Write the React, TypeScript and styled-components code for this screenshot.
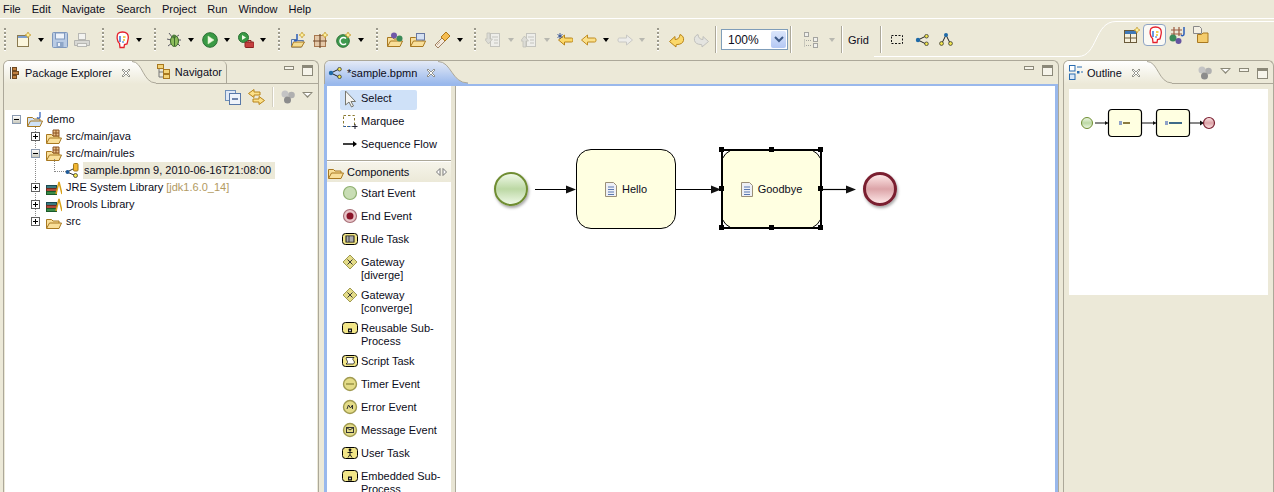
import React from 'react';
import styled, { createGlobalStyle } from 'styled-components';

/* Instruments */
const BEIGE = '#ece9d8';
const LINE = '#aca899';
const BLUE = '#99b8ec';
const FONT = '"Liberation Sans", Arial, sans-serif';

const GlobalStyle = createGlobalStyle`
  html, body { margin: 0; padding: 0; background: ${BEIGE}; }
  body { font: 11px ${FONT}; color: #0c0c20; overflow: hidden; }
  * { box-sizing: border-box; }
`;

/* Icons */
type IconProps = { children?: React.ReactNode; w?: number; h?: number };
const Ic = ({ children, w = 16, h = 16 }: IconProps) => (
    <svg width = { w } height = { h } viewBox = { `0 0 ${w} ${h}` } style = {{ display: 'block', flexShrink: 0 }}>
        {children}
    </svg>
);

const Star = ({ x = 11, y = 3 }: { x?: number; y?: number }) => (
    <path d = { `M${x} ${y - 3}l1 2 2 1-2 1-1 2-1-2-2-1 2-1z` } fill = '#fdf09a' stroke = '#c49a2c' strokeWidth = '.7' />
);

const NewIcon = () => <Ic><rect x = '1.5' y = '3.5' width = '11' height = '11' fill = '#fbf6dd' stroke = '#8a7a50' /><rect x = '2' y = '4' width = '10' height = '2' fill = '#7da0d0' /><Star x = { 12 } /></Ic>;
const SaveIcon = () => <Ic><rect x = '.5' y = '.5' width = '15' height = '15' rx = '1' fill = '#b9cbe4' stroke = '#7f98bd' /><rect x = '3.5' y = '1' width = '9' height = '6' fill = '#eef3fa' stroke = '#7f98bd' /><rect x = '4.5' y = '10' width = '7' height = '5' fill = '#8ea6c8' /><rect x = '6' y = '11' width = '2' height = '3' fill = '#eef3fa' /></Ic>;
const PrintIcon = () => <Ic><rect x = '4.5' y = '1.5' width = '7' height = '6' fill = '#f3f3f0' stroke = '#b8b8b4' /><path d = 'M.5 8.5h15v5H.5z' fill = '#d8d8d4' stroke = '#b4b4b0' /><rect x = '3.5' y = '11.5' width = '9' height = '3' fill = '#f3f3f0' stroke = '#b8b8b4' /></Ic>;
const HeadIcon = () => <Ic w = { 14 } h = { 18 }><path d = 'M3 2.5C5 .5 10 .5 12 2.5s1.2 6 .6 8l-.6 2.5-2.5.5-.5 3H5l-.5-4C2 11 1.5 5 3 2.5z' fill = '#fff' stroke = '#e5202c' strokeWidth = '1.3' /><path d = 'M5 5v6' stroke = '#2a6cd0' strokeWidth = '1.4' /><path d = 'M8 6h2.5M8 9h2' stroke = '#f0c020' strokeWidth = '1.3' /><path d = 'M8 10v2' stroke = '#2a6cd0' /></Ic>;
const BugIcon = () => <Ic><g stroke = '#334' strokeWidth = '.8'><path d = 'M3 1l3 4M13 3l-3 2M1 7l4 1M15 8l-4 0M2 14l4-3M14 14l-3-3' /></g><ellipse cx = '8.5' cy = '9' rx = '4' ry = '5.5' fill = '#8ebd5c' stroke = '#3d6a2c' /><circle cx = '8' cy = '4.5' r = '2' fill = '#4f7f3c' /><path d = 'M8.5 5v9' stroke = '#3d6a2c' /></Ic>;
const RunIcon = () => <Ic><circle cx = '8' cy = '8' r = '7.3' fill = '#3a9a45' stroke = '#2a7034' /><path d = 'M6 4l6 4-6 4z' fill = '#f4fbe8' stroke = '#d3eebb' strokeWidth = '.6' /></Ic>;
const ExtRunIcon = () => <Ic><circle cx = '5.5' cy = '5.5' r = '5' fill = '#3a9a45' stroke = '#2a7034' /><path d = 'M4 3l4 2.5-4 2.5z' fill = '#f4fbe8' /><rect x = '7' y = '10' width = '9' height = '5.5' rx = '1' fill = '#c64040' stroke = '#8a2020' /><path d = 'M10 10V8.500h3V10' stroke = '#8a2020' fill = 'none' /></Ic>;
const NewJavaIcon = () => <Ic><path d = 'M1.5 7.5h5l1 1h6l-2 6.5h-10z' fill = '#dce8f8' stroke = '#5a78a8' /><path d = 'M1.5 15l2-5h11l-3 5z' fill = '#f4dc90' stroke = '#a87820' /><path d = 'M7 2v6c0 1-2 1-3 .5' stroke = '#2a5cb8' strokeWidth = '1.5' fill = 'none' /><Star x = { 12 } /></Ic>;
const NewGridIcon = () => <Ic><rect x = '1.5' y = '3.5' width = '11' height = '11' fill = '#e4c8a8' stroke = '#a87850' /><path d = 'M7 2v14M0 9h14' stroke = '#704828' strokeWidth = '1.2' /><Star x = { 12 } /></Ic>;
const NewClassIcon = () => <Ic><circle cx = '7' cy = '9' r = '6.3' fill = '#3f9a4e' stroke = '#2a7034' /><path d = 'M10 6.5a3.5 3.500 0 100 5' stroke = '#fff' strokeWidth = '1.6' fill = 'none' /><Star x = { 12 } /></Ic>;
const Folder = ({ fill = '#f9df9a' }: { fill?: string }) => <g><path d = 'M.5 5.5h5l1.500 1.500h6v7H.5z' fill = { fill } stroke = '#a87820' /><path d = 'M.5 14.5l3-5.500h12l-2.500 5.500z' fill = { fill } stroke = '#a87820' /></g>;
const SphereFolderIcon = () => <Ic><Folder /><circle cx = '7' cy = '3.5' r = '3' fill = '#7058a8' /><circle cx = '12.5' cy = '6.5' r = '3' fill = '#3a8a58' /></Ic>;
const BoxFolderIcon = () => <Ic><Folder /><rect x = '6.5' y = '1.5' width = '8' height = '6.5' fill = '#d4e0f2' stroke = '#6878a0' /></Ic>;
const TorchIcon = () => <Ic><path d = 'M1 13l7-7 3 3-7 7z' fill = '#f3e9dc' stroke = '#a08060' /><path d = 'M7 5l5-5 4 4-5 5z' fill = '#f4bc50' stroke = '#b07818' /><path d = 'M3 13l3-3' stroke = '#c8b090' /></Ic>;
const AnnotDownIcon = () => <Ic><rect x = '5.5' y = '1.5' width = '9' height = '13' fill = '#eeeeea' stroke = '#c4c4be' /><path d = 'M7 5h6M9 8h4M9 11h4' stroke = '#c4c4be' /><path d = 'M2 1h3v6h2.500L3.500 12-.5 7H2z' fill = '#dcdcd6' stroke = '#bcbcb6' strokeWidth = '.7' /></Ic>;
const AnnotUpIcon = () => <Ic><rect x = '5.5' y = '1.5' width = '9' height = '13' fill = '#eeeeea' stroke = '#c4c4be' /><path d = 'M7 5h6M9 8h4M9 11h4' stroke = '#c4c4be' /><path d = 'M2 15h3V9h2.500L3.500 4-.5 9H2z' fill = '#dcdcd6' stroke = '#bcbcb6' strokeWidth = '.7' /></Ic>;
const ArrowLeft = ({ fill, stroke, x = 0 }: { fill: string; stroke: string; x?: number }) => <path transform = { `translate(${x} 0)` } d = 'M.5 8L6.5 3v3h7c1 0 1.500.5 1.500 2s-.5 2-1.500 2h-7v3z' fill = { fill } stroke = { stroke } />;
const LastEditIcon = () => <Ic><ArrowLeft fill = '#fbd86a' stroke = '#b88418' x = { 1 } /><path d = 'M3 1v6M.5 2.5l5 3M5.5 2.5l-5 3' stroke = '#2a4a90' strokeWidth = '.9' /></Ic>;
const BackIcon = () => <Ic><ArrowLeft fill = '#fbe08a' stroke = '#c08c20' /></Ic>;
const ForwardIcon = () => <Ic><g transform = 'translate(16 0) scale(-1 1)'><ArrowLeft fill = '#ececea' stroke = '#c8c8c4' /></g></Ic>;
const UNDO = 'M.5 9.5L6 4.500v3c3 0 4.500-1.500 5-5 3 1 4 3.500 3.500 6s-3 4-6.500 4l-1 .5V15z';
const UndoIcon = () => <Ic><path d = { UNDO } fill = '#fbd86a' stroke = '#b88418' /></Ic>;
const RedoIcon = () => <Ic><g transform = 'translate(16 0) scale(-1 1)'><path d = { UNDO } fill = '#e4e4e0' stroke = '#c0c0bc' /></g></Ic>;
const LayoutIcon = () => <Ic><g fill = '#f0f0ec' stroke = '#a4a4a0'><rect x = '1.5' y = '.5' width = '4' height = '4' /><rect x = '10.5' y = '5.5' width = '4' height = '4' /><rect x = '10.5' y = '11.5' width = '4' height = '4' /></g><path d = 'M1.5 7.5v7M3 8.500h6M3 13.500h6' stroke = '#a4a4a0' strokeDasharray = '1 1' /></Ic>;
const DashedBoxIcon = () => <Ic w = { 14 }><rect x = '1.5' y = '3.5' width = '11' height = '8' fill = 'none' stroke = '#111' strokeDasharray = '2 1.5' /></Ic>;
const ShareIcon = ({ h = 12 }: { h?: number }) => <Ic w = { 14 } h = { h }><path d = 'M3 6l8-4M3 6l8 4' stroke = '#222' /><circle cx = '3' cy = '6' r = '2.2' fill = '#1e6aa8' /><circle cx = '11.5' cy = '2.2' r = '1.8' fill = '#f4e850' stroke = '#222' strokeWidth = '.7' /><circle cx = '11.5' cy = '9.8' r = '1.8' fill = '#f4e850' stroke = '#222' strokeWidth = '.7' /></Ic>;
const TreeIcon = () => <Ic w = { 14 }><path d = 'M7 3l-4 8M7 3l4 8' stroke = '#222' /><circle cx = '7' cy = '3' r = '2' fill = '#1e6aa8' /><circle cx = '2.5' cy = '11.5' r = '1.9' fill = '#f4e850' stroke = '#222' strokeWidth = '.7' /><circle cx = '11.5' cy = '11.5' r = '1.9' fill = '#f4e850' stroke = '#222' strokeWidth = '.7' /></Ic>;
const TableIcon = () => <Ic><rect x = '.5' y = '3.5' width = '12' height = '12' fill = '#f6f0dc' stroke = '#6a5a3a' /><rect x = '1' y = '4' width = '11' height = '3' fill = '#3f78b8' /><path d = 'M.5 11h12M6.500 7v8' stroke = '#6a5a3a' /><Star x = { 13 } /></Ic>;
const DebugPerspIcon = () => <Ic w = { 18 } h = { 18 }><path d = 'M5 1v9M10 1v9M2 4h11M2 8h11' stroke = '#9a5a40' strokeWidth = '1.2' /><path d = 'M15 1v7c0 2-2 2-3 1' stroke = '#2a5cb8' strokeWidth = '1.5' fill = 'none' /><circle cx = '4' cy = '12' r = '3.5' fill = '#3a8a58' /><circle cx = '9.5' cy = '15' r = '3' fill = '#6454a0' /></Ic>;
const ResourceIcon = () => <Ic w = { 16 } h = { 18 }><path d = 'M.5.5h6l2 2v5h-8z' fill = '#f4f0e4' stroke = '#888' /><path d = 'M4.5 8.5h4l1.500-1.500h5v9.500H4.500z' fill = '#f4cc6c' stroke = '#a87820' /></Ic>;
const CollapseIcon = () => <Ic><rect x = '.5' y = '1.5' width = '10' height = '10' fill = '#dfe8f5' stroke = '#6f8fb8' /><rect x = '4.5' y = '4.5' width = '11' height = '11' fill = '#eef3fa' stroke = '#5878a8' /><path d = 'M7 10h6' stroke = '#2a4a80' strokeWidth = '1.3' /></Ic>;
const LinkIcon = () => <Ic w = { 17 }><path d = 'M6 .5L.5 4.500 6 8.500V6h6V3H6z' fill = '#fbe08a' stroke = '#b88418' /><path d = 'M11 7.5l5.500 4-5.500 4V13H5v-3h6z' fill = '#fbe08a' stroke = '#b88418' /></Ic>;
const SpheresIcon = () => <Ic w = { 14 }><circle cx = '4' cy = '5' r = '3.5' fill = '#c4c4c4' /><circle cx = '10.5' cy = '6' r = '3.3' fill = '#b0b0b0' /><circle cx = '6.5' cy = '11' r = '3.5' fill = '#8c8c8c' /></Ic>;
const CloseIcon = () => <Ic w = { 10 } h = { 10 }><path d = 'M2 1l3 3 3-3 1 1-3 3 3 3-1 1-3-3-3 3-1-1 3-3-3-3z' fill = '#fff' stroke = '#7c7c74' strokeWidth = '.8' /></Ic>;
const PackageViewIcon = () => <Ic><path d = 'M2.5 2v12' stroke = '#555' /><rect x = '4.5' y = '2.5' width = '4' height = '3' fill = '#c08040' stroke = '#704820' /><rect x = '4.5' y = '6.5' width = '6' height = '3' fill = '#c08040' stroke = '#704820' /><rect x = '4.5' y = '10.5' width = '4' height = '3' fill = '#c08040' stroke = '#704820' /></Ic>;
const NavigatorIcon = () => <Ic><path d = 'M2 3v10h4M2 8h4' stroke = '#777' fill = 'none' /><rect x = '.5' y = '.5' width = '6' height = '4' fill = '#f4d478' stroke = '#a87820' /><rect x = '6.5' y = '5.5' width = '6' height = '4' fill = '#f4d478' stroke = '#a87820' /><rect x = '6.5' y = '10.5' width = '6' height = '4' fill = '#f4d478' stroke = '#a87820' /></Ic>;
const OutlineIcon = () => <Ic w = { 14 }><rect x = '.5' y = '.5' width = '5.5' height = '5.5' fill = '#fff' stroke = '#2a6cb0' /><rect x = '.5' y = '9' width = '5.5' height = '5.5' fill = '#d8e8f8' stroke = '#2a6cb0' /><rect x = '8' y = '6' width = '2.5' height = '2.5' fill = '#2a6cb0' /><path d = 'M8 2h5M12 7h2' stroke = '#2a6cb0' /></Ic>;
const OpenFolderIcon = () => <Ic><Folder /></Ic>;
const ProjectIcon = () => <Ic><Folder fill = '#cfe2f8' /><path d = 'M13 0v5c0 1.500-2 1.500-3 .5' stroke = '#2a5cb8' strokeWidth = '1.2' fill = 'none' /></Ic>;
const PackageFolderIcon = () => <Ic><Folder /><path d = 'M7 1h6v6H7zM10 1v6M7 4h6' stroke = '#8a5020' fill = '#e8c088' /></Ic>;
const BpmnFileIcon = () => <Ic w = { 15 }><path d = 'M2 9l7-3.500M2 9l7 3' stroke = '#333' /><circle cx = '2.5' cy = '9' r = '2' fill = '#1e5a98' /><rect x = '8.5' y = '.5' width = '4.5' height = '7.5' rx = '1' fill = '#f2b632' stroke = '#a07818' /><circle cx = '10.5' cy = '12.5' r = '2' fill = '#f4e850' stroke = '#222' strokeWidth = '.7' /></Ic>;
const LibraryIcon = () => <Ic><rect x = '.5' y = '5.5' width = '10' height = '3' fill = '#3a7a80' stroke = '#1a4a50' /><rect x = '.5' y = '8.5' width = '10' height = '3' fill = '#b04a38' stroke = '#702a20' /><rect x = '.5' y = '11.5' width = '10' height = '3' fill = '#3a8a48' stroke = '#1a5a28' /><path d = 'M10 14l3-12 3 12' stroke = '#d8a018' strokeWidth = '1.5' fill = 'none' /></Ic>;
const CursorIcon = () => <Ic h = { 18 }><path d = 'M3.5 1v14l3.500-3 2.500 5 2-1-2.500-4.500h4.500z' fill = '#f4f4f2' stroke = '#77776f' /></Ic>;
const MarqueeIcon = () => <Ic><rect x = '1.5' y = '2.5' width = '11' height = '11' fill = 'none' stroke = '#8a7a30' strokeDasharray = '2.5 2' /><path d = 'M1.5 13.500h11' stroke = '#2a5ca8' strokeDasharray = '2.5 2' /><path d = 'M13 11v5M10.500 13.500h5' stroke = '#223' /></Ic>;
const FlowIcon = () => <Ic><path d = 'M1 8h11' stroke = '#000' strokeWidth = '1.5' /><path d = 'M11 5l4 3-4 3z' fill = '#000' /></Ic>;
const RoundEvent = ({ fill, stroke, dot }: { fill: string; stroke: string; dot?: string }) => <Ic><circle cx = '8' cy = '8' r = '6.5' fill = { fill } stroke = { stroke } strokeWidth = '1.2' />{dot ? <circle cx = '8' cy = '8' r = '3.5' fill = { dot } /> : null}</Ic>;
const StartIcon = () => <RoundEvent fill = '#c8ddb4' stroke = '#8fb070' />;
const EndIcon = () => <RoundEvent fill = '#e8c4c8' stroke = '#a87078' dot = '#8a1428' />;
const YellowBox = ({ children }: { children?: React.ReactNode }) => <Ic><rect x = '.5' y = '2.5' width = '15' height = '11' rx = '3' fill = '#f2e688' stroke = '#000' />{children}</Ic>;
const RuleIcon = () => <YellowBox><rect x = '4' y = '5' width = '8' height = '6' fill = '#fff' stroke = '#111' /><path d = 'M4 7h8M4 9h8M7 5v6' stroke = '#111' strokeWidth = '.7' /></YellowBox>;
const SubIcon = () => <YellowBox><rect x = '6' y = '8.5' width = '4' height = '4' fill = '#111' /><path d = 'M7 10.500h2M8 9.500v2' stroke = '#fff' strokeWidth = '.7' /></YellowBox>;
const ScriptIcon = () => <YellowBox><path d = 'M5 4.500h7c-2 2-1 2 0 3.500s0 3-1 3H4c1.500-1 2-2 1-3.500s-1-3 0-3.500z' fill = '#fff' stroke = '#111' strokeWidth = '.8' /></YellowBox>;
const UserIcon = () => <YellowBox><circle cx = '8' cy = '4.8' r = '1.4' fill = '#111' /><path d = 'M8 6v3.500l-2 3M8 9.500l2 3M5.500 7.500h5' stroke = '#111' strokeWidth = '.9' fill = 'none' /></YellowBox>;
const GatewayIcon = () => <Ic><path d = 'M8 1l7 7-7 7-7-7z' fill = '#e4dc88' stroke = '#a09a50' /><path d = 'M5.500 5.500l5 5M10.500 5.500l-5 5' stroke = '#333' fill = 'none' /></Ic>;
const OliveEvent = ({ children }: { children?: React.ReactNode }) => <Ic><circle cx = '8' cy = '8' r = '6.5' fill = '#e4dc88' stroke = '#a09a50' strokeWidth = '1.4' />{children}</Ic>;
const TimerIcon = () => <OliveEvent><path d = 'M4 8h8' stroke = '#9a9448' strokeWidth = '1.5' /></OliveEvent>;
const ErrorIcon = () => <OliveEvent><path d = 'M5 10l1.500-4 2 3 2-3v4' stroke = '#333' fill = 'none' /></OliveEvent>;
const MessageIcon = () => <OliveEvent><rect x = '4.5' y = '5.5' width = '7' height = '5' fill = 'none' stroke = '#333' /><path d = 'M4.500 5.500l3.500 2.500 3.500-2.500' stroke = '#333' fill = 'none' /></OliveEvent>;
const DocIcon = () => <Ic w = { 12 } h = { 15 }><path d = 'M.5.5h8l3 3v11H.5z' fill = '#eef0f6' stroke = '#9a8f78' /><path d = 'M3 5h6M3 7.500h6M3 10h6M3 12.500h6' stroke = '#5a78b0' /></Ic>;

/* Components */
const Tree = () => (
    <TreeBox>
        <TreeRow $level = { 0 }><Expander $open $soft /><ProjectIcon /><TreeText>demo</TreeText></TreeRow>
        <TreeRow $level = { 1 }><Expander /><PackageFolderIcon /><TreeText>src/main/java</TreeText></TreeRow>
        <TreeRow $level = { 1 }><Expander $open $soft /><PackageFolderIcon /><TreeText>src/main/rules</TreeText></TreeRow>
        <TreeRow $level = { 2 }>
            <LeafGuide /><BpmnFileIcon />
            <TreeText $selected>sample.bpmn 9, 2010-06-16T21:08:00</TreeText>
        </TreeRow>
        <TreeRow $level = { 1 }><Expander /><LibraryIcon /><TreeText>JRE System Library <Muted>[jdk1.6.0_14]</Muted></TreeText></TreeRow>
        <TreeRow $level = { 1 }><Expander /><LibraryIcon /><TreeText>Drools Library</TreeText></TreeRow>
        <TreeRow $level = { 1 }><Expander /><OpenFolderIcon /><TreeText>src</TreeText></TreeRow>
    </TreeBox>
);

const paletteTop = [
    { label: 'Select', icon: <CursorIcon />, active: true },
    { label: 'Marquee', icon: <MarqueeIcon /> },
    { label: 'Sequence Flow', icon: <FlowIcon /> },
];

const paletteItems = [
    { label: 'Start Event', icon: <StartIcon /> },
    { label: 'End Event', icon: <EndIcon /> },
    { label: 'Rule Task', icon: <RuleIcon /> },
    { label: 'Gateway\n[diverge]', icon: <GatewayIcon /> },
    { label: 'Gateway\n[converge]', icon: <GatewayIcon /> },
    { label: 'Reusable Sub-\nProcess', icon: <SubIcon /> },
    { label: 'Script Task', icon: <ScriptIcon /> },
    { label: 'Timer Event', icon: <TimerIcon /> },
    { label: 'Error Event', icon: <ErrorIcon /> },
    { label: 'Message Event', icon: <MessageIcon /> },
    { label: 'User Task', icon: <UserIcon /> },
    { label: 'Embedded Sub-\nProcess', icon: <SubIcon /> },
];

const handleSpots = [['0', '0'], ['50%', '0'], ['100%', '0'], ['0', '50%'], ['100%', '50%'], ['0', '100%'], ['50%', '100%'], ['100%', '100%']];

const Edge = ({ x, w }: { x: number; w: number }) => (
    <EdgeSvg $x = { x } width = { w } height = '11' viewBox = { `0 0 ${w} 11` }>
        <path d = { `M0 5.5H${w - 8}` } stroke = '#000' strokeWidth = '1.2' />
        <path d = { `M${w - 10} 1.5L${w} 5.5L${w - 10} 9.5z` } fill = '#111' />
    </EdgeSvg>
);

const MiniDiagram = () => (
    <svg width = '199' height = '70' viewBox = '0 0 199 70' style = {{ display: 'block' }}>
        <defs>
            <linearGradient id = 'miniGreen' x1 = '0' y1 = '0' x2 = '0' y2 = '1'><stop offset = '0' stopColor = '#eef8e6' /><stop offset = '.5' stopColor = '#bcd8a4' /><stop offset = '1' stopColor = '#eef8e6' /></linearGradient>
            <linearGradient id = 'miniRed' x1 = '0' y1 = '0' x2 = '0' y2 = '1'><stop offset = '0' stopColor = '#fde6e6' /><stop offset = '.5' stopColor = '#dca4a8' /><stop offset = '1' stopColor = '#fde6e6' /></linearGradient>
        </defs>
        <circle cx = '18' cy = '34' r = '5.5' fill = 'url(#miniGreen)' stroke = '#6f8d32' />
        <path d = 'M26 34h13M73 34h14M121 34h12' stroke = '#111' />
        <path d = 'M36 32l3 2-3 2zM84 32l3 2-3 2zM131 31.5l4 2.500-4 2.500z' fill = '#111' />
        <rect x = '39.5' y = '20.5' width = '33' height = '27' rx = '3.5' fill = '#ffffe1' stroke = '#000' strokeWidth = '1.2' />
        <rect x = '87.5' y = '20.5' width = '33' height = '27' rx = '3.5' fill = '#ffffe1' stroke = '#000' strokeWidth = '1.2' />
        <rect x = '50' y = '32' width = '3' height = '4' fill = '#8fa2c8' />
        <rect x = '54' y = '33' width = '7' height = '2' fill = '#8a7a40' />
        <rect x = '96' y = '32' width = '3' height = '4' fill = '#8fa2c8' />
        <rect x = '100' y = '33' width = '13' height = '2' fill = '#3f6a88' />
        <circle cx = '140' cy = '34' r = '5.5' fill = 'url(#miniRed)' stroke = '#7a1f30' strokeWidth = '1.2' />
    </svg>
);

/* Tab curve, shared by the three view stacks */
const TabCurve = ({ editor, w = 24 }: { editor?: boolean; w?: number }) => {
    const id = editor ? 'curveEditor' : 'curvePlain';
    const top = `M0 .5C${w * 0.45} .5 ${w * 0.45} 22 ${w} 22`;

    return (
        <CurveSvg width = { w } height = '23' viewBox = { `0 0 ${w} 23` }>
            <defs>
                <linearGradient id = { id } x1 = '0' y1 = '0' x2 = '0' y2 = '1'>
                    <stop offset = '0' stopColor = { editor ? '#e4eaf6' : '#fff' } />
                    <stop offset = '1' stopColor = { editor ? BLUE : BEIGE } />
                </linearGradient>
            </defs>
            <path d = { `${top}V23H0z` } fill = { `url(#${id})` } />
            <path d = { top } fill = 'none' stroke = { LINE } />
        </CurveSvg>
    );
};

const App = () => (
    <Page>
        <GlobalStyle />
        <MenuBar>
            {['File', 'Edit', 'Navigate', 'Search', 'Project', 'Run', 'Window', 'Help'].map((item) => <span key = { item }>{item}</span>)}
        </MenuBar>

        <Toolbar>
            <Grip $ml = { 3 } />
            <Tool $ml = { 9 }><NewIcon /></Tool><Drop $ml = { 4 } />
            <Tool $ml = { 7 }><SaveIcon /></Tool>
            <Tool $ml = { 6 }><PrintIcon /></Tool>
            <Grip $ml = { 11 } />
            <Tool $ml = { 9 }><HeadIcon /></Tool><Drop $ml = { 4 } />
            <Grip $ml = { 10 } />
            <Tool $ml = { 9 }><BugIcon /></Tool><Drop $ml = { 4 } />
            <Tool $ml = { 7 }><RunIcon /></Tool><Drop $ml = { 4 } />
            <Tool $ml = { 7 }><ExtRunIcon /></Tool><Drop $ml = { 4 } />
            <Grip $ml = { 10 } />
            <Tool $ml = { 9 }><NewJavaIcon /></Tool>
            <Tool $ml = { 7 }><NewGridIcon /></Tool>
            <Tool $ml = { 7 }><NewClassIcon /></Tool><Drop $ml = { 4 } />
            <Grip $ml = { 10 } />
            <Tool $ml = { 8 }><SphereFolderIcon /></Tool>
            <Tool $ml = { 7 }><BoxFolderIcon /></Tool>
            <Tool $ml = { 8 }><TorchIcon /></Tool><Drop $ml = { 5 } />
            <Grip $ml = { 9 } />
            <Tool $ml = { 8 }><AnnotDownIcon /></Tool><Drop $ml = { 5 } $off />
            <Tool $ml = { 6 }><AnnotUpIcon /></Tool><Drop $ml = { 5 } $off />
            <Tool $ml = { 6 }><LastEditIcon /></Tool>
            <Tool $ml = { 8 }><BackIcon /></Tool><Drop $ml = { 4 } />
            <Tool $ml = { 7 }><ForwardIcon /></Tool><Drop $ml = { 4 } $off />
            <Grip $ml = { 10 } />
            <Tool $ml = { 9 }><UndoIcon /></Tool>
            <Tool $ml = { 8 }><RedoIcon /></Tool>
            <ToolSep $ml = { 6 } />
            <ZoomCombo>
                <ZoomValue>100%</ZoomValue>
                <ZoomButton>
                    <svg width = '10' height = '7' viewBox = '0 0 10 7'><path d = 'M1 1l4 4 4-4' stroke = '#3d5a88' strokeWidth = '2' fill = 'none' /></svg>
                </ZoomButton>
            </ZoomCombo>
            <ToolSep $ml = { 2 } />
            <Tool $ml = { 11 }><LayoutIcon /></Tool><Drop $ml = { 8 } $off />
            <ToolSep $ml = { 5 } />
            <GridLabel>Grid</GridLabel>
            <ToolSep $ml = { 12 } />
            <Tool $ml = { 7 }><DashedBoxIcon /></Tool>
            <Tool $ml = { 9 }><ShareIcon /></Tool>
            <Tool $ml = { 8 }><TreeIcon /></Tool>

            <PerspectiveCurve width = '400' height = '40' viewBox = '0 0 400 40'>
                <path d = 'M0 38.5H204C224 38.5 220 3.5 242 3.5H400' fill = 'none' stroke = '#fff' />
            </PerspectiveCurve>
            <Perspectives>
                <PerspectiveSlot><TableIcon /></PerspectiveSlot>
                <PerspectiveSlot $active><HeadIcon /></PerspectiveSlot>
                <PerspectiveSlot><DebugPerspIcon /></PerspectiveSlot>
                <PerspectiveSlot><ResourceIcon /></PerspectiveSlot>
            </Perspectives>
        </Toolbar>

        <Workbench>
            <ExplorerPanel>
                <TabRow>
                    <ActiveTab $pad = { 4 } $end = { 1 }>
                        <PackageViewIcon />
                        <TabTitle $ml = { 1 }>Package Explorer</TabTitle>
                        <CloseIcon />
                    </ActiveTab>
                    <TabCurve />
                    <PlainTab><NavigatorIcon /><span>Navigator</span></PlainTab>
                    <ViewControls>
                        <MinButton /><MaxButton />
                    </ViewControls>
                </TabRow>
                <ViewToolbar>
                    <CollapseIcon />
                    <LinkIcon />
                    <ViewSep />
                    <SpheresIcon />
                    <MenuTriangle />
                </ViewToolbar>
                <Tree />
            </ExplorerPanel>

            <EditorPanel>
                <TabRow $editor>
                    <ActiveTab $editor $pad = { 3 } $end = { 2 }>
                        <ShareIcon />
                        <TabTitle $ml = { 5 }>*sample.bpmn</TabTitle>
                        <CloseIcon />
                    </ActiveTab>
                    <TabCurve editor w = { 30 } />
                    <ViewControls>
                        <MinButton /><MaxButton />
                    </ViewControls>
                </TabRow>
                <EditorFrame>
                    <Palette>
                        <PaletteList>
                            {paletteTop.map((item) => (
                                <PaletteRow key = { item.label } $active = { item.active }>
                                    <PaletteIcon>{item.icon}</PaletteIcon>{item.label}
                                </PaletteRow>
                            ))}
                            <PaletteDivider />
                            <Drawer>
                                <OpenFolderIcon />
                                <DrawerTitle>Components</DrawerTitle>
                                <svg width = '11' height = '8' viewBox = '0 0 11 8'><path d = 'M4 .5L.5 4 4 7.5zM7 .5L10.5 4 7 7.5z' fill = '#fff' stroke = '#777' /></svg>
                            </Drawer>
                            {paletteItems.map((item) => (
                                <PaletteRow key = { item.label }>
                                    <PaletteIcon>{item.icon}</PaletteIcon>{item.label}
                                </PaletteRow>
                            ))}
                        </PaletteList>
                        <PaletteSash />
                    </Palette>
                    <Canvas>
                        <StartNode />
                        <Edge x = { 79 } w = { 41 } />
                        <TaskNode $x = { 120 }><DocIcon />Hello</TaskNode>
                        <Edge x = { 220 } w = { 45 } />
                        <TaskNode $x = { 265 } $selected>
                            <DocIcon />Goodbye
                            {handleSpots.map(([left, top]) => <Handle key = { left + top } style = {{ left, top }} />)}
                        </TaskNode>
                        <Edge x = { 367 } w = { 33 } />
                        <EndNode />
                    </Canvas>
                </EditorFrame>
            </EditorPanel>

            <OutlinePanel>
                <TabRow>
                    <ActiveTab $pad = { 5 } $end = { 6 }>
                        <OutlineIcon />
                        <TabTitle $ml = { 4 }>Outline</TabTitle>
                        <CloseIcon />
                    </ActiveTab>
                    <TabCurve w = { 25 } />
                    <ViewControls>
                        <SpheresIcon /><MenuTriangle /><MinButton /><MaxButton />
                    </ViewControls>
                </TabRow>
                <OutlineView><MiniDiagram /></OutlineView>
            </OutlinePanel>
        </Workbench>
    </Page>
);

export default App;

/* Styles */
const Page = styled.div`
  width: 1274px;
  height: 492px;
  display: flex;
  flex-direction: column;
  overflow: hidden;
  background: ${BEIGE};
`;

const MenuBar = styled.div`
  height: 19px;
  flex-shrink: 0;
  display: flex;
  align-items: center;
  padding: 0 0 1px 3px;
  gap: 11px;
  border-bottom: 1px solid #fff;
`;

const Toolbar = styled.div`
  height: 41px;
  flex-shrink: 0;
  display: flex;
  align-items: center;
  position: relative;
`;

const Tool = styled.div<{ $ml: number }>`
  width: 16px;
  height: 18px;
  margin-left: ${(p) => p.$ml}px;
  display: flex;
  align-items: center;
  justify-content: center;
  flex-shrink: 0;
`;

const Drop = styled.div<{ $ml: number; $off?: boolean }>`
  width: 9px;
  margin-left: ${(p) => p.$ml}px;
  flex-shrink: 0;
  display: flex;
  justify-content: center;
  &::before {
    content: '';
    border-style: solid;
    border-width: 4px 3.5px 0;
    border-color: ${(p) => (p.$off ? '#b8b8b0' : '#000')} transparent transparent;
  }
`;

const Grip = styled.div<{ $ml: number }>`
  width: 4px;
  height: 23px;
  margin-left: ${(p) => p.$ml}px;
  flex-shrink: 0;
  background: repeating-linear-gradient(to bottom, #9c9a8c 0 2px, #fff 2px 3px, transparent 3px 4px) center / 2px 100% no-repeat;
`;

const ToolSep = styled.div<{ $ml: number }>`
  width: 2px;
  height: 27px;
  margin-left: ${(p) => p.$ml}px;
  flex-shrink: 0;
  background: linear-gradient(to right, ${LINE} 50%, #fff 50%);
`;

const ZoomCombo = styled.div`
  width: 67px;
  height: 21px;
  margin-left: 4px;
  flex-shrink: 0;
  display: flex;
  align-items: center;
  justify-content: space-between;
  background: #fff;
  border: 1px solid #7f9db9;
  padding: 1px;
`;

const ZoomValue = styled.span`
  padding-left: 5px;
  font-size: 12px;
`;

const ZoomButton = styled.div`
  width: 15px;
  height: 17px;
  display: flex;
  align-items: center;
  justify-content: center;
  border-radius: 2px;
  background: linear-gradient(#dbe6fb, #b4c8f4);
`;

const GridLabel = styled.span`
  margin-left: 5px;
  width: 20px;
  flex-shrink: 0;
`;

const PerspectiveCurve = styled.svg`
  position: absolute;
  right: 0;
  top: -1px;
`;

const Perspectives = styled.div`
  margin-left: auto;
  height: 100%;
  position: relative;
  display: flex;
  align-items: flex-start;
  padding: 5px 62px 0 0;
`;

const PerspectiveSlot = styled.div<{ $active?: boolean }>`
  width: 23px;
  height: 22px;
  display: flex;
  align-items: center;
  justify-content: center;
  border-radius: 4px;
  ${(p) => (p.$active ? 'background: #fbfaf5; border: 1px solid #8ea4c4;' : '')}
`;

const Workbench = styled.div`
  flex: 1;
  display: flex;
  padding-left: 3px;
  min-height: 0;
`;

const PanelBase = styled.div`
  display: flex;
  flex-direction: column;
  flex-shrink: 0;
  border: 1px solid ${LINE};
  border-bottom: 0;
  border-radius: 6px 6px 0 0;
  background: ${BEIGE};
`;

const ExplorerPanel = styled(PanelBase)`
  width: 316px;
`;

const EditorPanel = styled(PanelBase)`
  width: 735px;
  margin-left: 5px;
`;

const OutlinePanel = styled(PanelBase)`
  width: 211px;
  margin-left: 4px;
`;

const TabRow = styled.div<{ $editor?: boolean }>`
  height: 23px;
  flex-shrink: 0;
  display: flex;
  align-items: flex-start;
  position: relative;
  border-bottom: ${(p) => (p.$editor ? '0' : `1px solid ${LINE}`)};
`;

const ActiveTab = styled.div<{ $editor?: boolean; $pad: number; $end: number }>`
  height: 23px;
  flex-shrink: 0;
  display: flex;
  align-items: center;
  padding: 0 ${(p) => p.$end}px 0 ${(p) => p.$pad}px;
  border-radius: 5px 0 0 0;
  position: relative;
  z-index: 1;
  background: linear-gradient(${(p) => (p.$editor ? `#e4eaf6, ${BLUE}` : `#fff, ${BEIGE}`)});
`;

const CurveSvg = styled.svg`
  display: block;
  flex-shrink: 0;
  position: relative;
  z-index: 1;
`;

const TabTitle = styled.span<{ $ml: number }>`
  margin: 0 9px 0 ${(p) => p.$ml}px;
  white-space: nowrap;
`;

const PlainTab = styled.div`
  height: 22px;
  padding: 0 4px 0 1px;
  display: flex;
  align-items: center;
  gap: 2px;
  flex-shrink: 0;
  white-space: nowrap;
  border-right: 1px solid ${LINE};
  border-top-right-radius: 5px;
`;

const ViewControls = styled.div`
  margin-left: auto;
  display: flex;
  align-items: center;
  gap: 8px;
  padding: 4px 5px 0 0;
`;

const MinButton = styled.div`
  width: 10px;
  height: 4px;
  background: #f6f4ea;
  border: 1px solid #8b8878;
  margin-bottom: 6px;
`;

const MaxButton = styled.div`
  width: 11px;
  height: 11px;
  background: linear-gradient(#8b8878 2px, #f6f4ea 2px);
  border: 1px solid #8b8878;
`;

const MenuTriangle = styled.div`
  width: 11px;
  height: 6px;
  clip-path: polygon(0 0, 100% 0, 50% 100%);
  background: #8b8878;
  position: relative;
  margin-bottom: 4px;
  &::after {
    content: '';
    position: absolute;
    inset: 1px 2px 2px;
    clip-path: polygon(0 0, 100% 0, 50% 100%);
    background: #fff;
  }
`;

const ViewToolbar = styled.div`
  height: 26px;
  flex-shrink: 0;
  display: flex;
  align-items: center;
  justify-content: flex-end;
  gap: 7px;
  padding-right: 5px;
`;

const ViewSep = styled.div`
  width: 2px;
  height: 20px;
  background: linear-gradient(to right, #d4d0c0 50%, #fff 50%);
`;

const TreeBox = styled.div`
  flex: 1;
  margin: 0 1px;
  padding-top: 1px;
  background: #fff;
  position: relative;
  &::before {
    content: '';
    position: absolute;
    left: 30px;
    top: 16px;
    height: 96px;
    border-left: 1px dotted #888;
  }
`;

const TreeRow = styled.div<{ $level: number }>`
  height: 17px;
  display: flex;
  align-items: center;
  gap: 6px;
  padding-left: ${(p) => 7 + p.$level * 19}px;
  position: relative;
`;

const TreeText = styled.span<{ $selected?: boolean }>`
  margin-left: -3px;
  padding: 2px 4px 2px 1px;
  line-height: 13px;
  white-space: nowrap;
  background: ${(p) => (p.$selected ? BEIGE : 'transparent')};
`;

const Muted = styled.span`
  color: #b29a62;
`;

const Expander = styled.div<{ $open?: boolean; $soft?: boolean }>`
  width: 9px;
  height: 9px;
  flex-shrink: 0;
  position: relative;
  background: ${(p) => (p.$soft ? 'linear-gradient(#fff, #c8c8bc)' : '#fff')};
  border: 1px solid ${(p) => (p.$soft ? '#8a9ab0' : '#606060')};
  z-index: 1;
  &::before {
    content: '';
    position: absolute;
    left: 1px;
    right: 1px;
    top: 3px;
    height: 1px;
    background: #000;
  }
  &::after {
    content: '';
    display: ${(p) => (p.$open ? 'none' : 'block')};
    position: absolute;
    left: 3px;
    top: 1px;
    bottom: 1px;
    width: 1px;
    background: #000;
  }
`;

const LeafGuide = styled.div`
  width: 9px;
  height: 17px;
  flex-shrink: 0;
  position: relative;
  &::before {
    content: '';
    position: absolute;
    left: 4px;
    top: -3px;
    height: 12px;
    width: 11px;
    border-left: 1px dotted #888;
    border-bottom: 1px dotted #888;
  }
`;

const EditorFrame = styled.div`
  flex: 1;
  min-height: 0;
  display: flex;
  border: solid ${BLUE};
  border-width: 2px 3px 0 3px;
  margin-left: -1px;
  background: #fff;
`;

const Palette = styled.div`
  width: 129px;
  flex-shrink: 0;
  display: flex;
  background: #fff;
`;

const PaletteList = styled.div`
  flex: 1;
  min-width: 0;
  padding-top: 1px;
`;

const PaletteSash = styled.div`
  width: 5px;
  flex-shrink: 0;
  background: #e8e5d4;
  border-right: 1px solid ${LINE};
`;

const PaletteRow = styled.div<{ $active?: boolean }>`
  margin: 3px 0 0 13px;
  padding: 2px;
  min-height: 20px;
  display: flex;
  align-items: flex-start;
  line-height: 13px;
  gap: 3px;
  white-space: pre-line;
  width: ${(p) => (p.$active ? '77px' : 'auto')};
  background: ${(p) => (p.$active ? '#cfe1f8' : 'transparent')};
  border-radius: 2px;
`;

const PaletteIcon = styled.span`
  width: 16px;
  margin-top: -2px;
  flex-shrink: 0;
`;

const PaletteDivider = styled.div`
  height: 2px;
  margin: 4px 0 0;
  background: linear-gradient(${LINE} 50%, #fff 50%);
`;

const Drawer = styled.div`
  height: 20px;
  display: flex;
  align-items: center;
  gap: 3px;
  padding: 0 4px 1px 1px;
  background: linear-gradient(#f6f4ea, ${BEIGE});
`;

const DrawerTitle = styled.span`
  flex: 1;
`;

const Canvas = styled.div`
  flex: 1;
  position: relative;
  background: #fff;
`;

const EventNode = styled.div`
  position: absolute;
  top: 86px;
  width: 34px;
  height: 34px;
  border-radius: 50%;
`;

const StartNode = styled(EventNode)`
  left: 38px;
  border: 2px solid #6f8d32;
  background: linear-gradient(#eef8e6, #bcd8a4 50%, #eef8e6);
  box-shadow: 1px 2px 3px rgba(0, 0, 0, .35);
`;

const EndNode = styled(EventNode)`
  left: 407px;
  border: 3px solid #7a1f30;
  background: linear-gradient(#fde6e6, #dca4a8 50%, #fde6e6);
  box-shadow: 1px 2px 3px rgba(0, 0, 0, .35);
`;

const EdgeSvg = styled.svg<{ $x: number }>`
  position: absolute;
  left: ${(p) => p.$x}px;
  top: 97.5px;
`;

const TaskNode = styled.div<{ $x: number; $selected?: boolean }>`
  position: absolute;
  left: ${(p) => p.$x}px;
  top: 63px;
  width: ${(p) => (p.$selected ? 101 : 100)}px;
  height: 80px;
  display: flex;
  align-items: center;
  justify-content: center;
  gap: 5px;
  border: 1px solid #000;
  border-radius: 15px;
  background: #ffffe1;
  ${(p) => (p.$selected ? `
    &::before {
      content: '';
      position: absolute;
      inset: -1px;
      border: 2px solid #000;
    }
  ` : '')}
`;

const Handle = styled.span`
  position: absolute;
  width: 5px;
  height: 5px;
  margin: -3px 0 0 -3px;
  background: #000;
`;

const OutlineView = styled.div`
  flex: 0 0 206px;
  margin: 5px 5px 0;
  background: #fff;
`;
